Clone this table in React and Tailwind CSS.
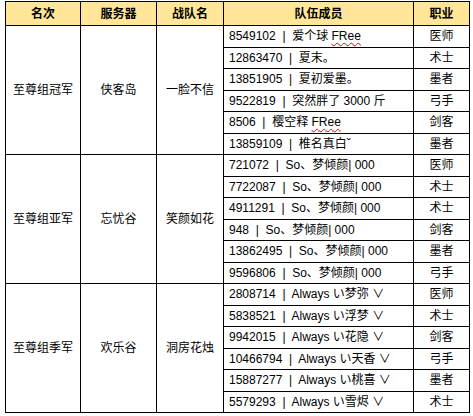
import React from 'react';

const groups = [
  {
    rank: '至尊组冠军',
    server: '侠客岛',
    team: '一脸不信',
    members: [
      ['8549102', '爱个球 ', 'FRee', '医师'],
      ['12863470', '夏末。', null, '术士'],
      ['13851905', '夏初爱墨。', null, '墨者'],
      ['9522819', '突然胖了 3000 斤', null, '弓手'],
      ['8506', '樱空释 ', 'FRee', '剑客'],
      ['13859109', '椎名真白ˇ', null, '墨者'],
    ],
  },
  {
    rank: '至尊组亚军',
    server: '忘忧谷',
    team: '笑颜如花',
    members: [
      ['721072', 'So、梦倾颜| 000', null, '医师'],
      ['7722087', 'So、梦倾颜| 000', null, '术士'],
      ['4911291', 'So、梦倾颜| 000', null, '术士'],
      ['948', 'So、梦倾颜| 000', null, '剑客'],
      ['13862495', 'So、梦倾颜| 000', null, '墨者'],
      ['9596806', 'So、梦倾颜| 000', null, '弓手'],
    ],
  },
  {
    rank: '至尊组季军',
    server: '欢乐谷',
    team: '洞房花烛',
    members: [
      ['2808714', 'Always い梦弥 ∨', null, '医师'],
      ['5838521', 'Always い浮梦 ∨', null, '术士'],
      ['9942015', 'Always い花隐 ∨', null, '剑客'],
      ['10466794', 'Always い天香 ∨', null, '弓手'],
      ['15887277', 'Always い桃喜 ∨', null, '墨者'],
      ['5579293', 'Always い雪烬 ∨', null, '术士'],
    ],
  },
];

const cell = 'border border-black px-0 py-0 align-middle';

export default function App() {
  return (
    <div
      className="bg-white pl-[5px] pt-px w-[473px] h-[416px] text-[12px] text-black"
      style={{ fontFamily: '"Liberation Sans", "Noto Sans CJK SC", sans-serif' }}
    >
      <table className="border-collapse table-fixed w-[464px]">
        <colgroup>
          <col className="w-[75px]" />
          <col className="w-[76px]" />
          <col className="w-[67px]" />
          <col className="w-[190px]" />
          <col className="w-[56px]" />
        </colgroup>
        <thead>
          <tr className="h-[24px] bg-[#ffe699] font-bold">
            <th className={`${cell} text-center`}>名次</th>
            <th className={`${cell} text-center`}>服务器</th>
            <th className={`${cell} text-center`}>战队名</th>
            <th className={`${cell} text-center`}>队伍成员</th>
            <th className={`${cell} text-center`}>职业</th>
          </tr>
        </thead>
        <tbody>
          {groups.map((g) =>
            g.members.map((m, i) => (
              <tr key={g.rank + i} className="h-[21.5px]">
                {i === 0 && (
                  <>
                    <td rowSpan={6} className={`${cell} text-center`}>{g.rank}</td>
                    <td rowSpan={6} className={`${cell} text-center`}>{g.server}</td>
                    <td rowSpan={6} className={`${cell} text-center`}>{g.team}</td>
                  </>
                )}
                <td className={`${cell} pl-[5px] whitespace-nowrap overflow-hidden`}>
                  {m[0]}
                  <span className="whitespace-pre">{'  |  '}</span>
                  {m[1]}
                  {m[2] && (
                    <span className="underline decoration-wavy decoration-red-600 decoration-1 underline-offset-2">
                      {m[2]}
                    </span>
                  )}
                </td>
                <td className={`${cell} text-center`}>{m[3]}</td>
              </tr>
            ))
          )}
        </tbody>
      </table>
    </div>
  );
}
